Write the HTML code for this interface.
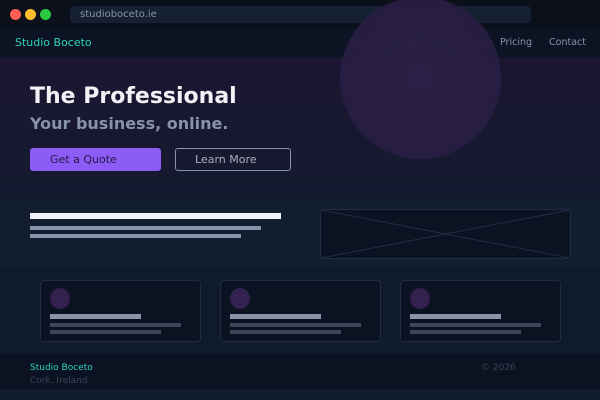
<!DOCTYPE html>
<html><head><style>
*{margin:0;padding:0;box-sizing:border-box}
body{width:600px;height:400px;overflow:hidden;background:#0f1a2d;font-family:"DejaVu Sans","Liberation Sans",sans-serif;position:relative}
.abs{position:absolute}
</style></head><body>
<div class="abs" style="left:0;top:0;width:600px;height:28px;background:#0b101a"></div>
<div class="abs" style="left:10px;top:9px;width:11px;height:11px;border-radius:50%;background:#ff5f57"></div>
<div class="abs" style="left:25px;top:9px;width:11px;height:11px;border-radius:50%;background:#febc2e"></div>
<div class="abs" style="left:40px;top:9px;width:11px;height:11px;border-radius:50%;background:#28c840"></div>
<div class="abs" style="left:70px;top:6px;width:461px;height:17px;border-radius:4px;background:#162033"></div>
<div class="abs" style="left:80px;top:7px;font-size:10px;color:#8a94a6;line-height:15px">studioboceto.ie</div>

<div class="abs" style="left:0;top:28px;width:600px;height:30px;background:#0c1424"></div>
<div class="abs" style="left:15px;top:36px;font-size:11px;color:#2dd4bf">Studio Boceto</div>
<div class="abs" style="left:350px;top:37px;font-size:9.5px;color:#8892a8">Services</div>
<div class="abs" style="left:405px;top:37px;font-size:9.5px;color:#8892a8">Work</div>
<div class="abs" style="left:452px;top:37px;font-size:9.5px;color:#8892a8">Process</div>
<div class="abs" style="left:500px;top:37px;font-size:9.5px;color:#8892a8">Pricing</div>
<div class="abs" style="left:549px;top:37px;font-size:9.5px;color:#8892a8">Contact</div>

<div class="abs" style="left:0;top:58px;width:600px;height:140px;background:linear-gradient(180deg,#1b1632 0%,#141a2f 100%)"></div>
<div class="abs" style="left:340px;top:-3px;width:161px;height:162px;border-radius:50%;background:radial-gradient(circle,#2c2148 0%,#251c40 100%);opacity:0.96"></div>

<div class="abs" style="left:30px;top:84px;font-size:22px;font-weight:bold;color:#f1f2f6">The Professional</div>
<div class="abs" style="left:30px;top:114px;font-size:16px;font-weight:bold;color:#8892a8">Your business, online.</div>
<div class="abs" style="left:30px;top:148px;width:131px;height:23px;border-radius:3px;background:#8b5cf6;color:#241a44;font-size:11px;line-height:23px;padding-left:20px">Get a Quote</div>
<div class="abs" style="left:175px;top:148px;width:116px;height:23px;border-radius:3px;border:1px solid #8892a8;color:#a8b0c0;font-size:11px;line-height:21px;padding-left:19px">Learn More</div>

<div class="abs" style="left:0;top:198px;width:600px;height:70px;background:#121e2f"></div>
<div class="abs" style="left:30px;top:213px;width:251px;height:6px;background:#f1f2f6"></div>
<div class="abs" style="left:30px;top:226px;width:231px;height:4px;background:#8892a8"></div>
<div class="abs" style="left:30px;top:234px;width:211px;height:4px;background:#8892a8"></div>
<svg class="abs" style="left:320px;top:209px" width="251" height="50"><rect x="0.5" y="0.5" width="250" height="49" rx="3" fill="#0b1222" stroke="#1e2d45"/><line x1="1" y1="1" x2="250" y2="49" stroke="#1e2d45"/><line x1="250" y1="1" x2="1" y2="49" stroke="#1e2d45"/></svg>

<div class="abs" style="left:0;top:268px;width:600px;height:85px;background:#0f1a2d"></div>
<div class="abs" style="left:40px;top:280px;width:161px;height:62px;border:1px solid #1e2d45;border-radius:4px;background:#0b1222"></div>
<div class="abs" style="left:220px;top:280px;width:161px;height:62px;border:1px solid #1e2d45;border-radius:4px;background:#0b1222"></div>
<div class="abs" style="left:400px;top:280px;width:161px;height:62px;border:1px solid #1e2d45;border-radius:4px;background:#0b1222"></div>
<div class="abs" style="left:50px;top:288px;width:20px;height:21px;border-radius:50%;background:#33214f"></div>
<div class="abs" style="left:230px;top:288px;width:20px;height:21px;border-radius:50%;background:#33214f"></div>
<div class="abs" style="left:410px;top:288px;width:20px;height:21px;border-radius:50%;background:#33214f"></div>
<div class="abs" style="left:50px;top:314px;width:91px;height:5px;background:#8892a8"></div>
<div class="abs" style="left:230px;top:314px;width:91px;height:5px;background:#8892a8"></div>
<div class="abs" style="left:410px;top:314px;width:91px;height:5px;background:#8892a8"></div>
<div class="abs" style="left:50px;top:323px;width:131px;height:4px;background:#3d4656"></div>
<div class="abs" style="left:230px;top:323px;width:131px;height:4px;background:#3d4656"></div>
<div class="abs" style="left:410px;top:323px;width:131px;height:4px;background:#3d4656"></div>
<div class="abs" style="left:50px;top:330px;width:111px;height:4px;background:#3d4656"></div>
<div class="abs" style="left:230px;top:330px;width:111px;height:4px;background:#3d4656"></div>
<div class="abs" style="left:410px;top:330px;width:111px;height:4px;background:#3d4656"></div>

<div class="abs" style="left:0;top:353px;width:600px;height:36px;background:#0b1221"></div>
<div class="abs" style="left:30px;top:363px;font-size:9px;color:#2dd4bf">Studio Boceto</div>
<div class="abs" style="left:30px;top:376px;font-size:9px;color:#3a4556">Cork, Ireland</div>
<div class="abs" style="left:481px;top:363px;font-size:9px;color:#3a4556">© 2026</div>
</body></html>
